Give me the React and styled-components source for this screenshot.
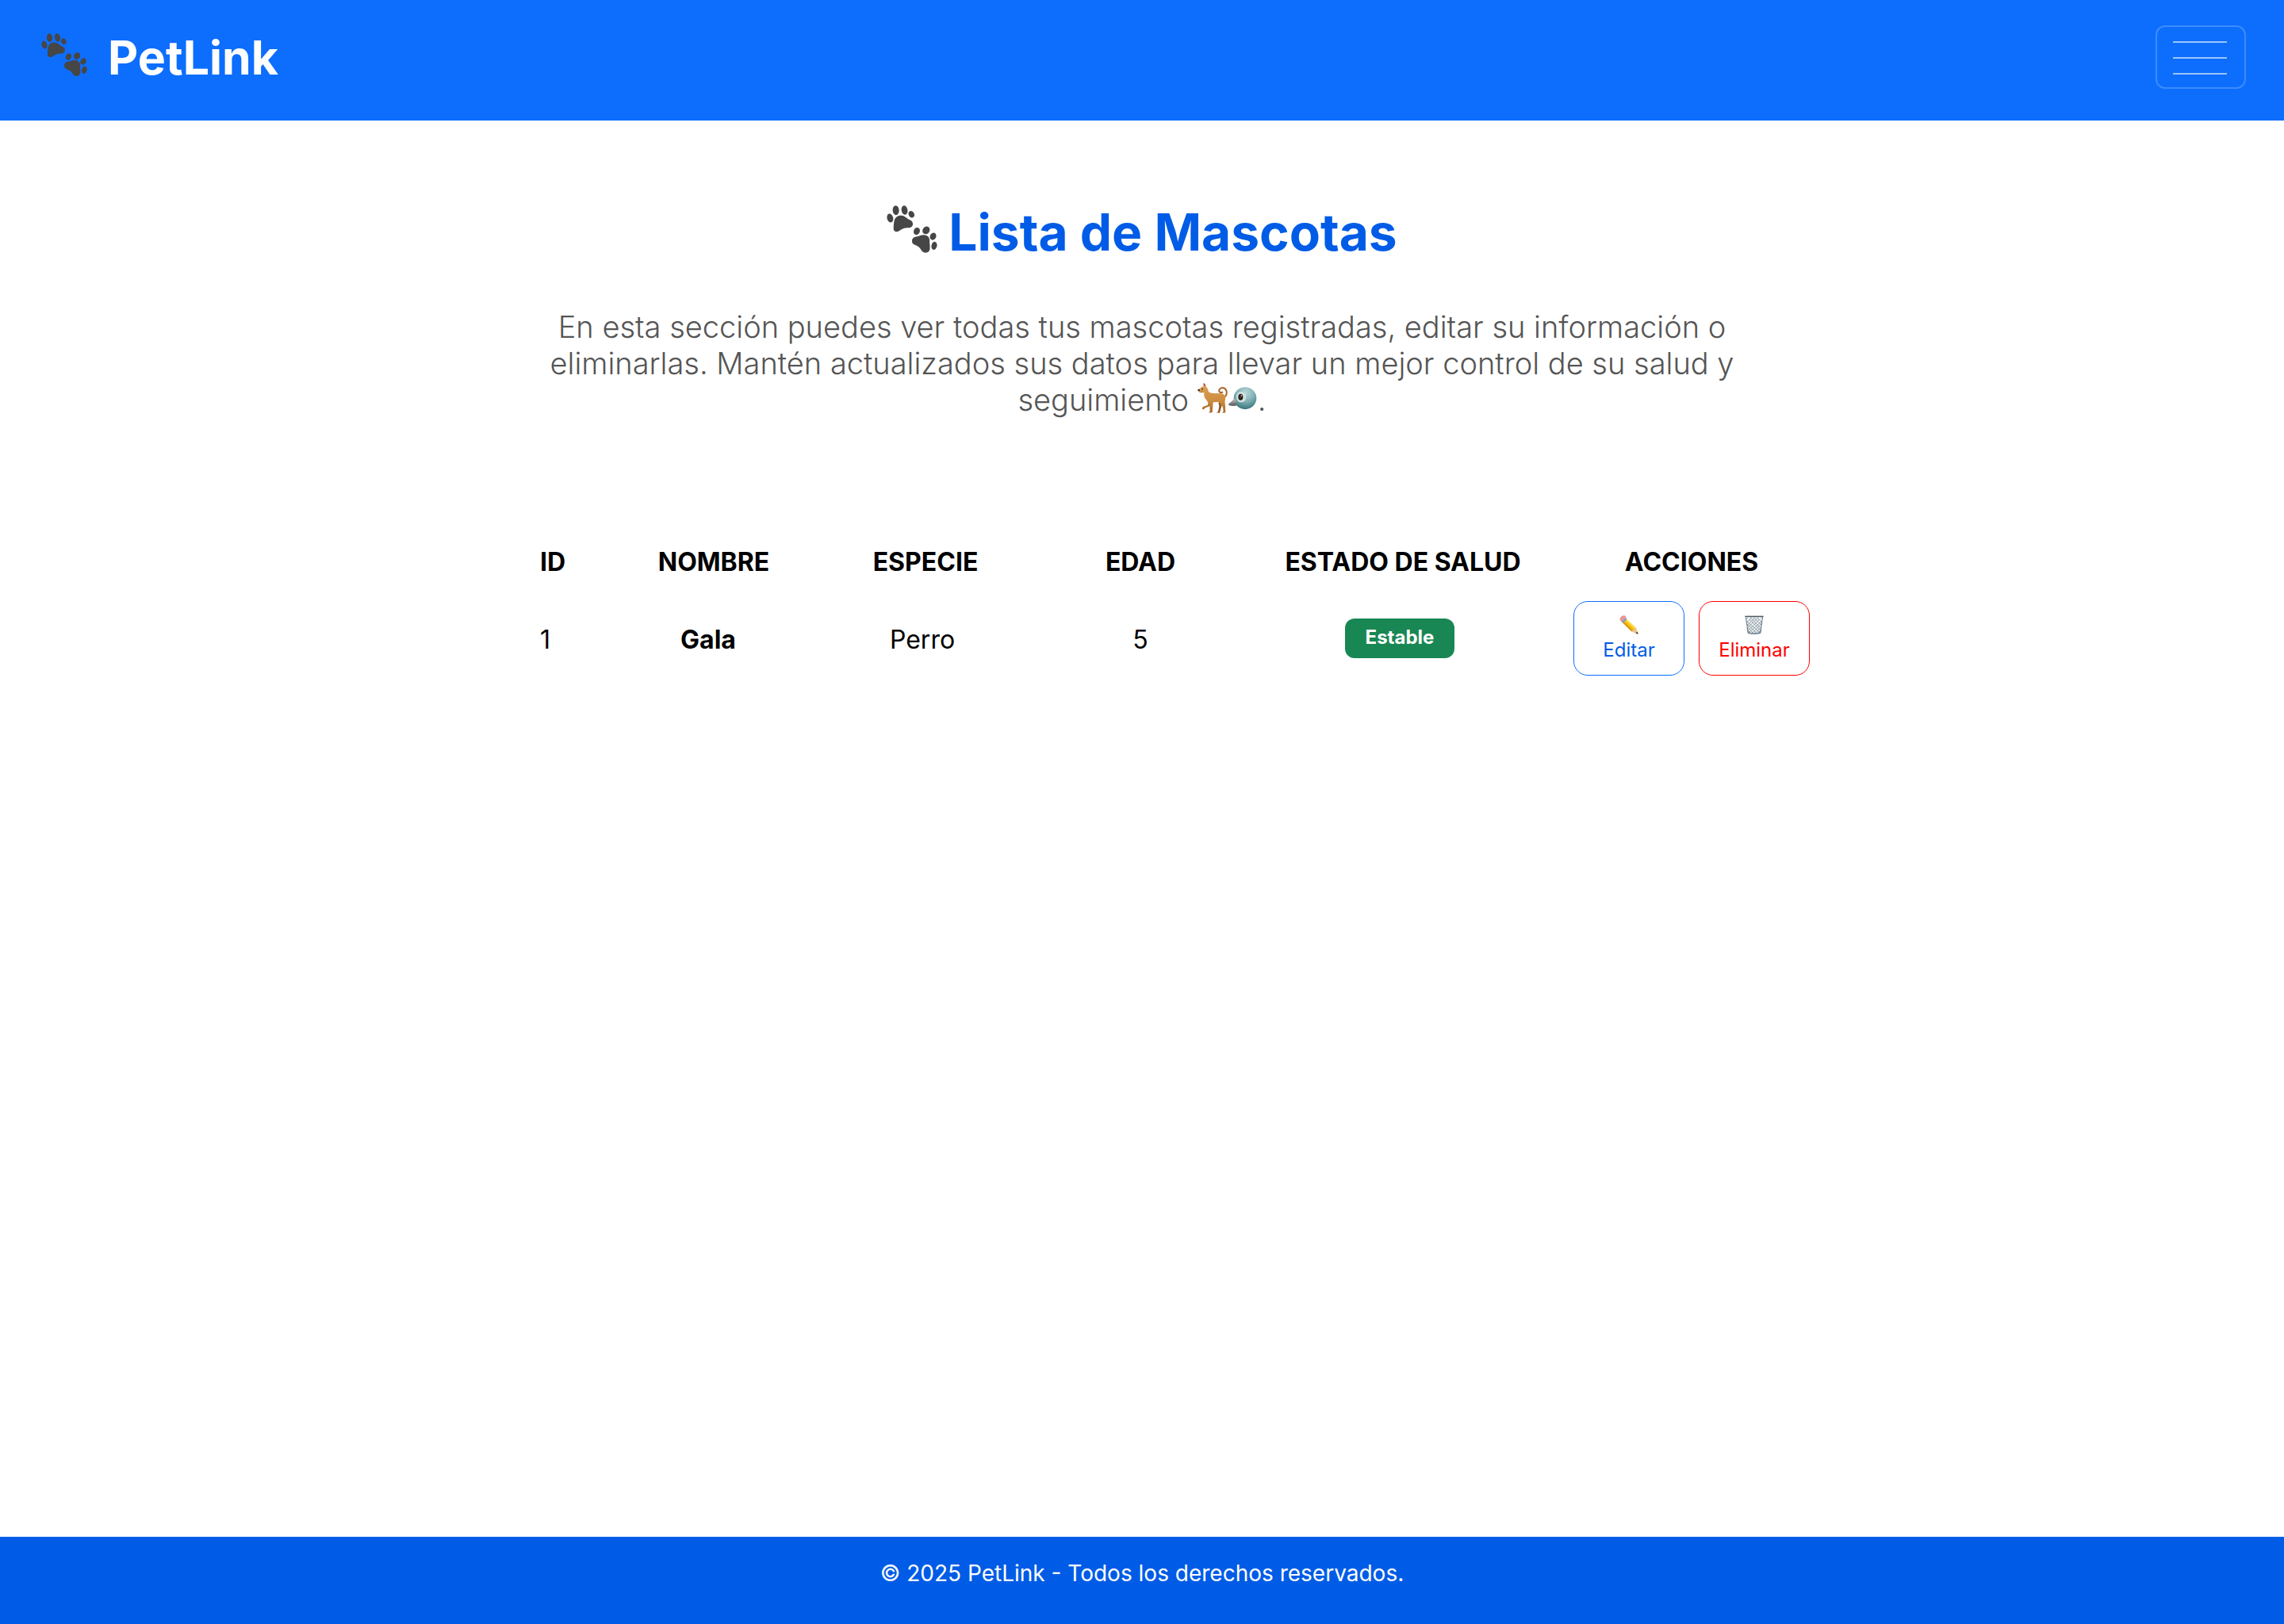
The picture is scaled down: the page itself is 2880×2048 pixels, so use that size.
import React from "react";
import styled, { createGlobalStyle } from "styled-components";

const GlobalStyle = createGlobalStyle`
  * { box-sizing: border-box; }
  body {
    margin: 0;
    background: #fff;
    color: #000;
    font-family: Inter, "Liberation Sans", sans-serif;
  }
`;

const Page = styled.div`
  display: flex;
  flex-direction: column;
  min-height: 100vh;
`;

const Navbar = styled.header`
  display: flex;
  justify-content: space-between;
  align-items: flex-start;
  padding: 32px 48px 38px 52px;
  background: #0d6efd;
`;

const Brand = styled.a`
  display: flex;
  align-items: center;
  gap: 26px;
  color: #fff;
  font-size: 59px;
  font-weight: 700;
  line-height: 82px;
  text-decoration: none;
`;

const Toggler = styled.button`
  display: flex;
  flex-direction: column;
  align-items: center;
  justify-content: center;
  gap: 18px;
  width: 114px;
  height: 80px;
  padding: 2px 2px 0 0;
  background: transparent;
  border: 2px solid rgba(255, 255, 255, 0.2);
  border-radius: 12px;
`;

const TogglerBar = styled.span`
  width: 68px;
  height: 2px;
  background: rgba(255, 255, 255, 0.6);
`;

const Main = styled.main`
  flex: 1;
  display: flex;
  flex-direction: column;
  align-items: center;
  padding: 102px 48px;
`;

const Title = styled.h1`
  display: flex;
  align-items: center;
  gap: 14px;
  margin: 0;
  color: #005ce6;
  font-size: 64px;
  font-weight: 700;
  line-height: 78px;
`;

const Intro = styled.p`
  max-width: 1520px;
  margin: 57px 0 0;
  color: #555;
  font-size: 38px;
  font-weight: 300;
  line-height: 46px;
  text-align: center;
`;

const PetTable = styled.table`
  width: 100%;
  max-width: 1728px;
  margin-top: 162px;
  border-collapse: collapse;
  table-layout: fixed;
  font-size: 32px;
  line-height: 39px;
`;

const Col = styled.col`
  width: ${(p) => p.$width}px;
`;

const HeadCell = styled.th`
  padding: 0 0 30px ${(p) => (p.$first ? "105px" : "0")};
  font-weight: 700;
  text-align: ${(p) => (p.$first ? "left" : "center")};
  white-space: nowrap;
`;

const Cell = styled.td`
  padding: ${(p) => (p.$media ? 0 : 2)}px ${(p) => p.$trail || 0}px 0
    ${(p) => (p.$first ? "105px" : "0")};
  font-weight: ${(p) => (p.$strong ? 700 : 400)};
  text-align: ${(p) => (p.$first ? "left" : "center")};
  vertical-align: middle;
`;

const Badge = styled.span`
  display: block;
  width: 138px;
  margin: 0 auto;
  padding: 9px 0 12px;
  background: #198754;
  border-radius: 12px;
  color: #fff;
  font-size: 24px;
  font-weight: 700;
  line-height: 29px;
`;

const Actions = styled.div`
  display: flex;
  justify-content: center;
  gap: 18px;
`;

const ActionButton = styled.button`
  display: flex;
  flex-direction: column;
  align-items: center;
  gap: 5px;
  width: 140px;
  height: 94px;
  padding: 17px 0 0;
  background: transparent;
  border: 1px solid ${(p) => (p.$danger ? "#ff0000" : "#0d6efd")};
  border-radius: 18px;
  color: ${(p) => (p.$danger ? "#ff0000" : "#005ce6")};
  font-family: inherit;
  font-size: 24px;
  line-height: 29px;
`;

const Footer = styled.footer`
  padding: 29px 48px 47px;
  background: #005ce6;
  color: #fff;
  font-size: 28px;
  line-height: 34px;
  text-align: center;
`;

const PawSvg = styled.svg`
  flex: none;
  width: ${(p) => p.$size}px;
  fill: #464646;
`;

const InlineEmoji = styled.svg`
  width: 38px;
  height: 38px;
  vertical-align: -3px;
`;

const Paws = ({ size }) => (
  <PawSvg $size={size} viewBox="155 124 176 189" aria-hidden="true">
    <ellipse cx="167" cy="168" rx="10.5" ry="15.5" transform="rotate(-14 167 168)" />
    <ellipse cx="187" cy="141" rx="11" ry="16.5" transform="rotate(-3 187 141)" />
    <ellipse cx="217" cy="140.500" rx="10.500" ry="16" transform="rotate(-10 217 140.500)" />
    <ellipse cx="241" cy="155" rx="9.5" ry="12" transform="rotate(-25 241 155)" />
    <path d="M179 203C179 192 180 183 182 175C185 164 195 159 206 159C219 160 224 169 235 174C243 178 246 182 246 189C245 198 238 202 228 202C214 201 205 208 198 213C188 219 178 214 179 203Z" />
    <ellipse cx="259.500" cy="213.500" rx="10.500" ry="13" transform="rotate(25 259.500 213.500)" />
    <ellipse cx="292" cy="210.500" rx="12" ry="14" transform="rotate(35 292 210.500)" />
    <ellipse cx="316" cy="231.500" rx="10.500" ry="13" transform="rotate(25 316 231.500)" />
    <ellipse cx="320" cy="264" rx="9.5" ry="14" transform="rotate(12 320 264)" />
    <path d="M243 248C243 237 251 233 261 232C270 231 276 225 287 227C299 229 304 236 304 246C303 256 306 263 305 274C304 284 298 288 290 288C279 287 277 281 271 273C266 266 259 264 253 261C246 259 243 255 243 248Z" />
  </PawSvg>
);

const Dog = () => (
  <InlineEmoji viewBox="92 38 114 114" role="img" aria-label="perro">
    <defs>
      <linearGradient id="dogCoat" x1="0" y1="0" x2="0" y2="1">
        <stop offset="0" stopColor="#dfa458" />
        <stop offset="0.6" stopColor="#cd8c3f" />
        <stop offset="1" stopColor="#a5682c" />
      </linearGradient>
    </defs>
    <path d="M180 94C196 96 204 84 202 70C200 56 182 51 175 62C171 70 178 78 186 73" fill="none" stroke="#a9652a" strokeWidth="6" strokeLinecap="round" />
    <path d="M134 108L130 122L112 128L109 137L117 138L119 133L137 126L146 112Z" fill="#b1732f" />
    <path d="M171 112L174 126L170 146L163 150L176 151L183 126L184 106Z" fill="#8f5927" />
    <path d="M116 50L114 39L120 41L124 51C130 56 132 64 134 71C142 79 166 76 183 78C194 80 199 88 197 100C193 109 199 122 197 136L198 150L185 151L190 145L188 130C183 121 178 116 174 110L151 111C150 124 149 138 148 149L135 151L139 144L138 126C137 116 128 106 122 97C115 88 117 80 117 74C107 76 98 74 96 69C93 65 94 61 101 60C104 54 109 51 116 50Z" fill="url(#dogCoat)" />
    <path d="M114 39L120 41L122 50L116 50Z" fill="#b14d42" />
    <circle cx="97" cy="65" r="4" fill="#302721" />
    <circle cx="110" cy="61" r="2.500" fill="#302721" />
    <path d="M99 72Q105 74 110 70" fill="none" stroke="#774319" strokeWidth="1.500" />
  </InlineEmoji>
);

const Bird = () => (
  <InlineEmoji viewBox="207 38 114 114" role="img" aria-label="pájaro">
    <defs>
      <radialGradient id="birdHead" cx="0.52" cy="0.25" r="0.75">
        <stop offset="0" stopColor="#b8d7d9" />
        <stop offset="0.5" stopColor="#85b3b7" />
        <stop offset="1" stopColor="#39757b" />
      </radialGradient>
      <linearGradient id="birdBeak" x1="0" y1="0" x2="0" y2="1">
        <stop offset="0" stopColor="#c2c2c2" />
        <stop offset="1" stopColor="#626466" />
      </linearGradient>
    </defs>
    <ellipse cx="273" cy="95.500" rx="43" ry="42" fill="url(#birdHead)" />
    <ellipse cx="258" cy="91" rx="19" ry="20" fill="#d1e0e0" />
    <ellipse cx="256" cy="91" rx="9" ry="12" fill="#1e1e1c" />
    <ellipse cx="255" cy="92" rx="4" ry="6" fill="#49301f" />
    <circle cx="259" cy="86" r="2.500" fill="#fff" />
    <path d="M231 96C239 99 243 110 239 124C230 125 212 126 210 120C211 114 224 109 231 96Z" fill="url(#birdBeak)" />
    <path d="M211 119Q225 118 240 115" fill="none" stroke="#505355" strokeWidth="2" />
  </InlineEmoji>
);

const Pencil = () => (
  <svg width="24" height="24" viewBox="0 0 72 72" aria-hidden="true">
    <path d="M22 10L62 47L71 71L46 61L10 26Z" fill="#f4bd13" />
    <path d="M25 13L62 47L57 51L20 18Z" fill="#ffdc46" />
    <path d="M14 29L46 61L50 56L17 24Z" fill="#d99511" />
    <path d="M62 47L71 71L46 61L50 56L57 51Z" fill="#e9c58f" />
    <path d="M68 62L71 71L61 67Z" fill="#333" />
    <path d="M20 6L29 15L13 30L5 21Z" fill="#8ba1b0" />
    <path d="M17 1Q24 0 26 8L7 24Q0 18 2 12Q5 2 17 1Z" fill="#e9969d" />
  </svg>
);

const Basket = () => (
  <svg width="24" height="24" viewBox="0 0 72 72" aria-hidden="true">
    <path d="M4 5L13 68Q36 74 59 68L68 5Z" fill="#f0f3f5" />
    <path d="M5 14L17 3L63 51L59 67L7 22M7 31L46 69L61 59L17 14M11 45L33 69M13 59L23 69M67 13L57 3L9 48L13 67L65 22M64 31L26 69L11 59L58 14M62 44L38 69M60 57L49 69M30 4L66 39M43 4L67 28M30 4L7 28M43 4L9 39" fill="none" stroke="#82909a" strokeWidth="2.500" />
    <path d="M4 5L13 68M68 5L59 68" stroke="#6d7b85" strokeWidth="3" />
    <path d="M12 64Q36 70 60 64L59 69Q36 75 13 69Z" fill="#7c8c98" />
    <path d="M1 2H71V6H1Z" fill="#4c5a63" />
  </svg>
);

const columns = [
  { label: "ID", width: 190 },
  { label: "NOMBRE", width: 268 },
  { label: "ESPECIE", width: 266 },
  { label: "EDAD", width: 276 },
  { label: "ESTADO DE SALUD", width: 386 },
  { label: "ACCIONES", width: 342 },
];

const pets = [{ id: 1, name: "Gala", species: "Perro", age: 5, health: "Estable" }];

export default function App() {
  return (
    <Page>
      <GlobalStyle />
      <Navbar>
        <Brand href="#">
          <Paws size={58} />
          PetLink
        </Brand>
        <Toggler type="button" aria-label="Abrir menú">
          <TogglerBar />
          <TogglerBar />
          <TogglerBar />
        </Toggler>
      </Navbar>
      <Main>
        <Title>
          <Paws size={64} />
          Lista de Mascotas
        </Title>
        <Intro>
          En esta sección puedes ver todas tus mascotas registradas, editar su información o
          eliminarlas. Mantén actualizados sus datos para llevar un mejor control de su salud y
          seguimiento <Dog />
          <Bird />.
        </Intro>
        <PetTable>
          <colgroup>
            {columns.map((c) => (
              <Col key={c.label} $width={c.width} />
            ))}
          </colgroup>
          <thead>
            <tr>
              {columns.map((c, i) => (
                <HeadCell key={c.label} scope="col" $first={i === 0}>
                  {c.label}
                </HeadCell>
              ))}
            </tr>
          </thead>
          <tbody>
            {pets.map((pet) => (
              <tr key={pet.id}>
                <Cell $first>{pet.id}</Cell>
                <Cell $strong $trail={14}>{pet.name}</Cell>
                <Cell $trail={8}>{pet.species}</Cell>
                <Cell>{pet.age}</Cell>
                <Cell $media $trail={8}>
                  <Badge>{pet.health}</Badge>
                </Cell>
                <Cell $media>
                  <Actions>
                    <ActionButton type="button">
                      <Pencil />
                      Editar
                    </ActionButton>
                    <ActionButton type="button" $danger>
                      <Basket />
                      Eliminar
                    </ActionButton>
                  </Actions>
                </Cell>
              </tr>
            ))}
          </tbody>
        </PetTable>
      </Main>
      <Footer>© 2025 PetLink - Todos los derechos reservados.</Footer>
    </Page>
  );
}
